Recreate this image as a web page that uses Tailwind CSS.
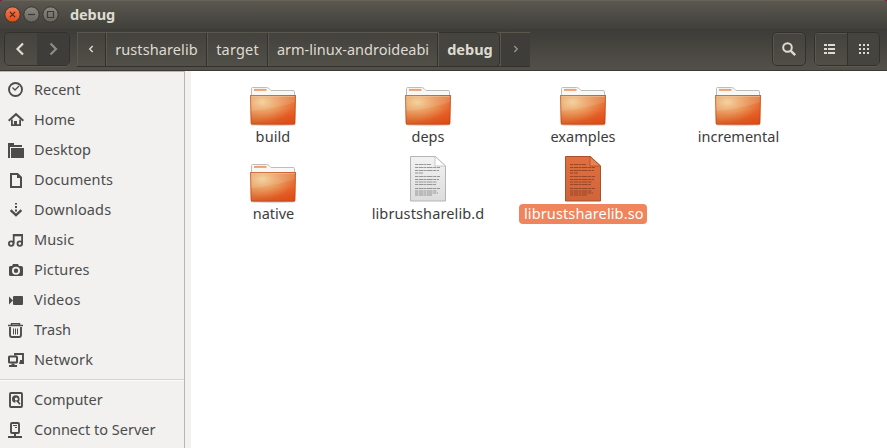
<!DOCTYPE html>
<html lang="en">
<head>
<meta charset="utf-8">
<title>debug</title>
<script src="https://cdn.jsdelivr.net/npm/@tailwindcss/browser@4"></script>
</head>
<body class="w-[887px] h-[448px] overflow-hidden bg-[#7a1f45] font-['Noto_Sans',sans-serif] text-[14.5px] leading-5 text-[#3c3c3c]">
<svg width="0" height="0" class="absolute">
  <defs>
    <linearGradient id="fold" x1="0" y1="0" x2="1" y2="1"><stop offset="0" stop-color="#e08a50"/><stop offset=".5" stop-color="#e47c40"/><stop offset="1" stop-color="#ec4a14"/></linearGradient>
    <radialGradient id="glow" cx=".27" cy=".25" r=".7"><stop offset="0" stop-color="#f3cf95"/><stop offset="1" stop-color="#f0a868" stop-opacity="0"/></radialGradient>
    <linearGradient id="dark" x1="0" y1="0" x2="0" y2="1"><stop offset=".5" stop-color="#d04010" stop-opacity="0"/><stop offset="1" stop-color="#cc4812" stop-opacity=".5"/></linearGradient>
    <linearGradient id="paper" x1="0" y1="0" x2="0" y2="1"><stop offset="0" stop-color="#f2f2f2"/><stop offset="1" stop-color="#dcdcdc"/></linearGradient>
    <linearGradient id="opaper" x1="0" y1="0" x2="0" y2="1"><stop offset="0" stop-color="#e26f3f"/><stop offset="1" stop-color="#cf653b"/></linearGradient>
    <symbol id="folder" viewBox="0 0 48 48">
      <ellipse cx="24" cy="46" rx="22" ry="1.2" fill="#000" opacity=".15"/>
      <path d="M2.500 20V9.500q0-1 1-1h14q1.500 0 2.500 1l2 2H44q1.500 0 1.500 1V20z" fill="#f8f8f7" stroke="#bdbdba"/>
      <path d="M5 10.900h12.500" stroke="#f0a070" stroke-width="2"/>
      <path d="M1 16h46l-.8 28.200q0 1.300-1.300 1.300H3.100q-1.300 0-1.300-1.300z" fill="url(#fold)"/>
      <path d="M1 16h46l-.8 28.200q0 1.300-1.300 1.300H3.100q-1.300 0-1.300-1.300z" fill="url(#dark)"/>
      <path d="M1 16h46l-.8 28.500H1.800z" fill="url(#glow)"/>
      <path d="M1 16h46l-.4 7Q26 30 1.600 32z" fill="#fff" opacity=".1"/>
      <path d="M1.500 16.500h45l-.8 28.500H2.300z" fill="none" stroke="#b8481c" opacity=".6"/>
      <path d="M2.500 17.500h43" stroke="#f6c9a0" opacity=".5"/>
    </symbol>
    <g id="lines"><path d="M11 8.500h16M11 11.500h25M11 14.500h24M11 17h8M11 20.500h25M11 23.500h24M11 26h22M11 28.500h21M11 32.500h25M11 35h22M11 37h23M11 39h17" stroke-dasharray="3 .6 5 .5 2 .5 6 .6"/></g>
    <symbol id="search" viewBox="0 0 16 16"><circle cx="6.500" cy="6.500" r="4.300" fill="none" stroke="currentColor" stroke-width="2"/><path d="M9.800 9.800l4.400 4.400" stroke="currentColor" stroke-width="2.400"/></symbol>
  </defs>
</svg>
<div class="flex h-full flex-col">
  <header class="flex h-[29px] shrink-0 items-center rounded-t-[4px] border-t border-[#67635b] bg-linear-to-b from-[#5b5850] to-[#403f3a] pl-[4px] text-[#dfdbd2]">
    <svg class="h-[18px] w-[56px]" viewBox="0 0 56 18" fill="none">
      <defs><linearGradient id="red" x1="0" y1="0" x2="0" y2="1"><stop stop-color="#f37b56"/><stop offset="1" stop-color="#df4b16"/></linearGradient><linearGradient id="gry" x1="0" y1="0" x2="0" y2="1"><stop stop-color="#8b887f"/><stop offset="1" stop-color="#686660"/></linearGradient></defs>
      <circle cx="8.500" cy="8.500" r="7.700" fill="url(#red)" stroke="#35342f"/><path d="M5.900 5.900l5.200 5.200m0-5.200l-5.200 5.200" stroke="#46291e" stroke-width="1.200"/>
      <circle cx="27.500" cy="8.500" r="7.700" fill="url(#gry)" stroke="#35342f"/><path d="M24 8.500h7" stroke="#3a3935" stroke-width="1.200"/>
      <circle cx="46.500" cy="8.500" r="7.700" fill="url(#gry)" stroke="#35342f"/><path d="M43.500 5.500h6v6h-6z" stroke="#3a3935" stroke-width="1.200"/>
    </svg>
    <h1 class="ml-[10px] pb-[2px] font-bold tracking-[-0.1px]">debug</h1>
  </header>
  <nav class="flex h-[42px] shrink-0 items-start border-b border-[#3a3935] bg-linear-to-b from-[#3d3c38] to-[#535049] pl-[4px] pt-[3px] text-[#dfdbd2]">
    <div class="flex h-[34px] w-[66px] overflow-hidden rounded-[5px] border border-[#32312d] shadow-[0_1px_0_#5c5951]">
      <button class="grid w-[32px] place-items-center bg-linear-to-b from-[#44433e] to-[#504e47] pr-[2px]"><svg class="h-[14px] w-[14px]" viewBox="0 0 14 14"><path d="M10 1.500L4.500 7l5.500 5.500" fill="none" stroke="currentColor" stroke-width="2.200"/></svg></button>
      <button class="grid flex-1 place-items-center bg-[#3e3d39] text-[#8f8c84]"><svg class="h-[14px] w-[14px]" viewBox="0 0 14 14"><path d="M4.500 1.500L10 7l-5.500 5.500" fill="none" stroke="currentColor" stroke-width="2.200"/></svg></button>
    </div>
    <div class="ml-[7px] flex h-[35px] border-y border-t-[#5a574f] border-b-[#32312d] bg-linear-to-b from-[#43423d] to-[#514f48] *:pb-[2px]">
      <div class="grid w-[29px] place-items-center border-l border-r border-l-[#5a574f] border-r-[#32312d] pr-[1px]"><svg class="h-[8px] w-[6px]" viewBox="0 0 6 8"><path d="M4.700 1L1.700 4l3 3" fill="none" stroke="currentColor" stroke-width="1.400"/></svg></div>
      <div class="grid w-[101px] place-items-center border-l border-r border-l-[#5a574f] border-r-[#32312d] tracking-[0.1px]">rustsharelib</div>
      <div class="grid w-[61px] place-items-center border-l border-r border-l-[#5a574f] border-r-[#32312d] tracking-[0.2px]">target</div>
      <div class="grid w-[170px] place-items-center border-l border-r border-l-[#5a574f] border-r-[#32312d] whitespace-nowrap">arm-linux-androideabi</div>
      <div class="-my-px grid w-[62px] place-items-center rounded-r-[5px] border border-[#32312d] border-l-[#5a574f] bg-[#45443f] pl-[2px] font-bold">debug</div>
      <div class="grid w-[30px] place-items-center border-l border-[#5a574f] bg-[#3e3d39] text-[#99968d]"><svg class="h-[8px] w-[6px]" viewBox="0 0 6 8"><path d="M1.300 1l3 3-3 3" fill="none" stroke="currentColor" stroke-width="1.300"/></svg></div>
    </div>
    <div class="ml-auto mr-[8px] grid h-[34px] w-[34px] place-items-center rounded-[5px] border border-[#32312d] bg-linear-to-b from-[#44433e] to-[#504e47] shadow-[inset_0_1px_0_#59564e,inset_1px_0_0_#59564e]"><svg class="h-4 w-4"><use href="#search"/></svg></div>
    <div class="mr-[7px] flex h-[34px] w-[66px] overflow-hidden rounded-[5px] border border-[#32312d] shadow-[0_1px_0_#5c5951]">
      <div class="flex w-[33px] items-center border-r border-[#32312d] bg-linear-to-b from-[#44433e] to-[#504e47] pl-[9px] shadow-[inset_0_1px_0_#59564e,inset_1px_0_0_#59564e]"><svg class="h-[12px] w-[12px]" viewBox="0 0 12 12" fill="currentColor" shape-rendering="crispEdges"><path d="M0 1h3v2H0zM4 1h7v2H4zM0 5h3v2H0zM4 5h7v2H4zM0 9h3v2H0zM4 9h7v2H4z"/></svg></div>
      <div class="flex flex-1 items-center bg-[#45443f] pl-[10px]"><svg class="h-[12px] w-[12px]" viewBox="0 0 12 12" fill="currentColor" shape-rendering="crispEdges"><path d="M1 1h2v2H1zM5 1h2v2H5zM9 1h2v2H9zM1 5h2v2H1zM5 5h2v2H5zM9 5h2v2H9zM1 9h2v2H1zM5 9h2v2H5zM9 9h2v2H9z"/></svg></div>
    </div>
  </nav>
  <main class="flex min-h-0 flex-1 bg-[#f2f1f0]">
    <aside class="w-[185px] shrink-0 border-r border-t border-[#b9b7b3] pt-[3px] text-[#4c4c4c] [&_li]:flex [&_li]:h-[30px] [&_li]:items-center [&_li]:gap-[10px] [&_li]:pl-[8px] [&_span]:pb-[2px] [&_svg]:h-4 [&_svg]:w-4 [&_svg]:shrink-0">
      <ul>
        <li><svg viewBox="0 0 16 16" fill="none" stroke="currentColor"><circle cx="7.500" cy="7.500" r="6.500" stroke-width="1.900"/><path d="M4.500 5.500L7 8l4-4" stroke-width="1.300"/></svg><span>Recent</span></li>
        <li><svg viewBox="0 0 16 16"><path d="M.6 8.700L8 2.200l7.400 6.500" fill="none" stroke="currentColor" stroke-width="2"/><path d="M3.900 7.500V13.100H12.100V7.500" fill="none" stroke="currentColor" stroke-width="1.800"/><path d="M6 9h3v4H6z" fill="currentColor"/></svg><span>Home</span></li>
        <li><svg viewBox="0 0 16 16" fill="currentColor"><path d="M0 1h6v2h8v2H2v11H0zM3 6h13v10H3z"/></svg><span class="tracking-[0.1px]">Desktop</span></li>
        <li><svg viewBox="0 0 16 16"><path d="M3 2h6.500L13 5.500V15H3z" fill="none" stroke="currentColor" stroke-width="2"/><path d="M9 1v5h5z" fill="currentColor"/></svg><span class="tracking-[0.1px]">Documents</span></li>
        <li><svg viewBox="0 0 16 16"><path d="M7 1h2v1.500H7zM7 4h2v2H7zM7 7.500h2v2H7z" fill="currentColor"/><path d="M2.600 8.200L8 13.200l5.400-5" fill="none" stroke="currentColor" stroke-width="2.300"/></svg><span class="tracking-[0.15px]">Downloads</span></li>
        <li><svg viewBox="0 0 16 16" fill="none" stroke="currentColor" stroke-width="1.800"><circle cx="3.200" cy="11.600" r="2.300"/><circle cx="11.800" cy="11.600" r="2.300"/><path d="M5.700 11.600V3h8.400v8.600"/><path d="M5 3.200h10" stroke-width="2.200"/></svg><span class="tracking-[0.1px]">Music</span></li>
        <li><svg viewBox="0 0 16 16" fill="currentColor" fill-rule="evenodd"><path d="M2 4h2l1-2h5l1 2h2q2 0 2 1.500v7q0 1.500-1.500 1.500h-11Q1 14 1 12.500v-7Q1 4 2 4zM8 4.700a4 4 0 100 8 4 4 0 000-8zm0 1.800a2.200 2.200 0 110 4.400 2.200 2.200 0 010-4.400z"/></svg><span class="tracking-[0.15px]">Pictures</span></li>
        <li><svg viewBox="0 0 16 16" fill="currentColor"><path d="M1 4.500l4 4-4 4z"/><rect x="5" y="4" width="10" height="9" rx="1"/></svg><span class="tracking-[0.25px]">Videos</span></li>
        <li><svg viewBox="0 0 16 16" fill="none" stroke="currentColor"><path d="M0 3.500h15" stroke-width="1.500"/><path d="M3.500 3V1.700h8V3" stroke-width="1.400"/><path d="M2 5v8q0 2 2 2h7q2 0 2-2V5" stroke-width="1.900"/><path d="M5.500 6.500v6M7.500 6.500v6M9.500 6.500v6"/></svg><span>Trash</span></li>
        <li><svg viewBox="0 0 16 16"><path d="M7 3.500V2h8v7h-3" fill="none" stroke="currentColor" stroke-width="1.900"/><rect x="1" y="4.500" width="8" height="6" rx=".5" fill="#f2f1f0" stroke="currentColor" stroke-width="2"/><path d="M3.500 11.500h3V13H9v2H1v-2h2.500zM12 8.500h2.500V10H16v2h-5z" fill="currentColor"/></svg><span class="tracking-[0.1px]">Network</span></li>
      </ul>
      <hr class="mb-[4px] mt-[4px] h-[2px] border-0 border-t border-[#d6d4d1] bg-[#fafafa]">
      <ul>
        <li><svg viewBox="0 0 16 16"><rect x="2" y="1" width="12" height="14" rx="1" fill="none" stroke="currentColor" stroke-width="1.900"/><circle cx="7.800" cy="7" r="3.800" fill="currentColor"/><circle cx="8.300" cy="7" r="1.500" fill="#f2f1f0"/><path d="M7.500 9.500l2.500 3" stroke="#f2f1f0" stroke-width="1.500"/><path d="M9 8.500l3 3.800" stroke="currentColor" stroke-width="1.600"/></svg><span>Computer</span></li>
        <li><svg viewBox="0 0 16 16"><rect x="3" y="1" width="8" height="10" rx="1" fill="none" stroke="currentColor" stroke-width="1.900"/><path d="M5 3.500h4M7 5.500h2" stroke="currentColor"/><path d="M6 11h2v3h6v2H0v-2h6z" fill="currentColor"/></svg><span>Connect to Server</span></li>
      </ul>
    </aside>
    <section class="ml-[6px] grid flex-1 auto-rows-[77px] grid-cols-[repeat(4,155px)] content-start bg-white pl-[4.5px] pt-[8px] [&_figcaption]:h-5 [&_figcaption]:leading-[18px] [&_figure]:flex [&_figure]:flex-col [&_figure]:items-center [&_figure>svg]:h-12 [&_figure>svg]:w-12">
      <figure><svg><use href="#folder"/></svg><figcaption class="tracking-[0.1px]">build</figcaption></figure>
      <figure><svg><use href="#folder"/></svg><figcaption>deps</figcaption></figure>
      <figure><svg><use href="#folder"/></svg><figcaption>examples</figcaption></figure>
      <figure><svg><use href="#folder"/></svg><figcaption class="pl-[1px]">incremental</figcaption></figure>
      <figure><svg><use href="#folder"/></svg><figcaption class="pl-[1px]">native</figcaption></figure>
      <figure><svg viewBox="0 0 48 48"><path d="M6.500.5h25l10 9.500v35h-35z" fill="url(#paper)" stroke="#b4b4b4"/><use href="#lines" stroke="#8c8c8c" stroke-width=".9"/><path d="M31 .5V10h10.500z" fill="#fff" stroke="#bbb" stroke-width=".8"/></svg><figcaption class="tracking-[0.12px]">librustsharelib.d</figcaption></figure>
      <figure><svg viewBox="0 0 48 48"><path d="M6.500.5h25l10 9.500v35h-35z" fill="url(#opaper)" stroke="#a9502c"/><use href="#lines" stroke="#8f4427" stroke-width=".9"/><path d="M31 .5V10h10.500z" fill="#ea8257" stroke="#a9502c" stroke-width=".8"/></svg><figcaption class="w-[128px] rounded-[4px] bg-[#f0845c] pl-[5px] tracking-[0.12px] text-white">librustsharelib.so</figcaption></figure>
    </section>
  </main>
</div>
</body>
</html>
